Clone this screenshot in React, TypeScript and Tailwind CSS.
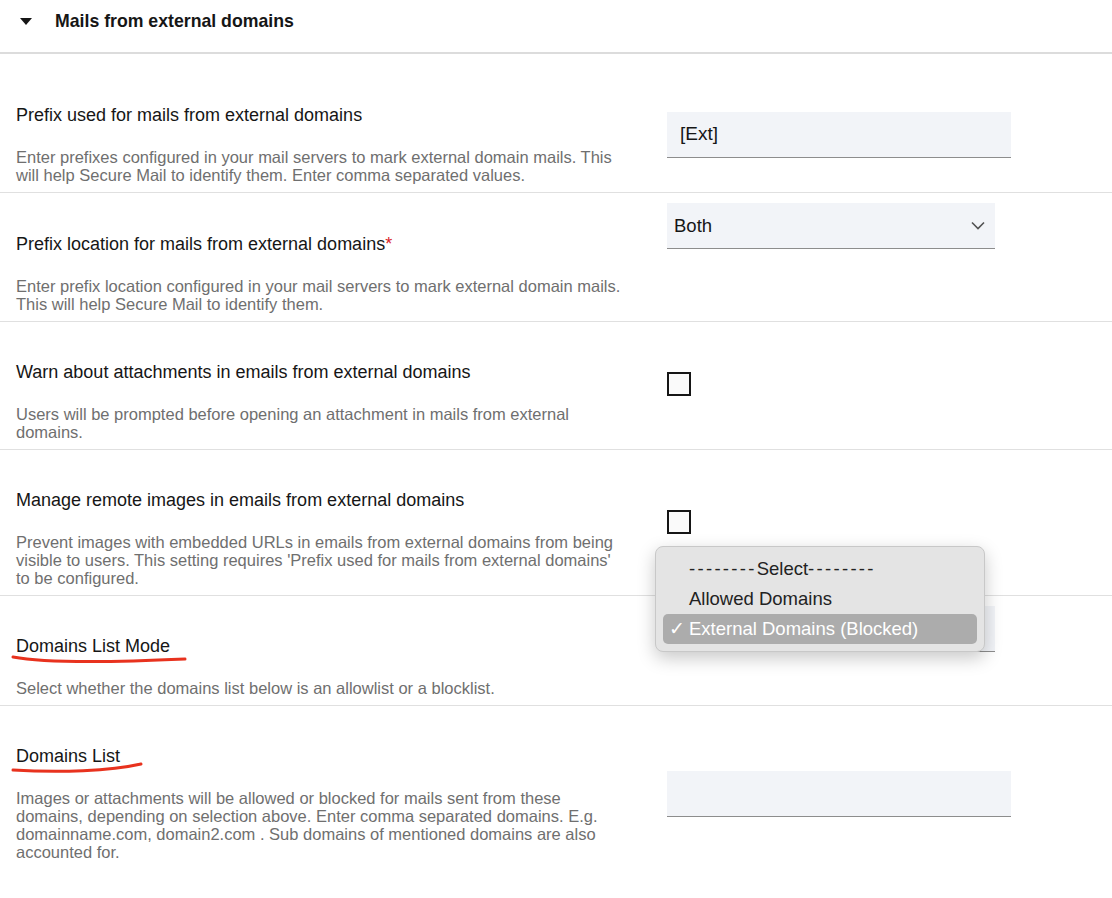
import React from "react";

const font = { fontFamily: '"Liberation Sans", Arial, sans-serif' };

function Row({
  label,
  required,
  desc,
  children,
  labelPt = "pt-[40px]",
  controlMt,
  underline,
  last,
}: {
  label: string;
  required?: boolean;
  desc: React.ReactNode;
  children?: React.ReactNode;
  labelPt?: string;
  controlMt: string;
  underline?: React.ReactNode;
  last?: boolean;
}) {
  return (
    <div className={`flex ${last ? "" : "border-b border-[#e0e0e0]"}`}>
      <div className={`w-[667px] shrink-0 pl-4 pr-[20px] pb-2 ${labelPt}`}>
        <div className="relative text-[18px] leading-[21px] text-[#161616]">
          {label}
          {required && <span className="text-[#da1e28]">*</span>}
          {underline}
        </div>
        <div className="mt-[22px] text-[16.5px] leading-[18px] text-[#6f6f6f]">{desc}</div>
      </div>
      <div className={`flex-1 ${controlMt}`}>{children}</div>
    </div>
  );
}

function TextInput({ value }: { value?: string }) {
  return (
    <div className="flex h-[46px] w-[344px] items-center border-b border-[#8d8d8d] bg-[#f2f4f8] px-[13px] text-[19px] text-[#161616]">
      {value}
    </div>
  );
}

function Select({ value }: { value?: string }) {
  return (
    <div className="flex h-[46px] w-[328px] items-center justify-between border-b border-[#8d8d8d] bg-[#f2f4f8] pl-[7px] pr-[10px] text-[18.5px] text-[#161616]">
      <span>{value}</span>
      <svg width="14" height="9" viewBox="0 0 14 9" fill="none">
        <path d="M1 1.5 L7 7.5 L13 1.5" stroke="#525252" strokeWidth="1.6" />
      </svg>
    </div>
  );
}

function Checkbox() {
  return <div className="h-[24px] w-[24px] border-[2px] border-[#161616] bg-[#fafafa]" />;
}

export default function App() {
  return (
    <div className="relative min-h-[898px] w-[1112px] bg-white" style={font}>
      {/* Header */}
      <div className="flex h-[54px] items-start border-b-2 border-[#dcdcdc]">
        <div className="flex items-center pl-[20px] pt-[11px]">
          <svg width="12" height="8" viewBox="0 0 12 8" className="mt-[1px]">
            <path d="M0 0 L12 0 L6 7 Z" fill="#161616" />
          </svg>
          <span className="ml-[23px] text-[17.7px] font-bold leading-[20px] text-[#161616]">
            Mails from external domains
          </span>
        </div>
      </div>

      <Row
        label="Prefix used for mails from external domains"
        labelPt="pt-[51px]"
        controlMt="mt-[58px]"
        desc={
          <>
            Enter prefixes configured in your mail servers to mark external domain mails. This
            <br />
            will help Secure Mail to identify them. Enter comma separated values.
          </>
        }
      >
        <TextInput value="[Ext]" />
      </Row>

      <Row
        label="Prefix location for mails from external domains"
        required
        labelPt="pt-[41px]"
        controlMt="mt-[10px]"
        desc={
          <>
            Enter prefix location configured in your mail servers to mark external domain mails.
            <br />
            This will help Secure Mail to identify them.
          </>
        }
      >
        <Select value="Both" />
      </Row>

      <Row
        label="Warn about attachments in emails from external domains"
        controlMt="mt-[50px]"
        desc={
          <>
            Users will be prompted before opening an attachment in mails from external
            <br />
            domains.
          </>
        }
      >
        <Checkbox />
      </Row>

      <Row
        label="Manage remote images in emails from external domains"
        controlMt="mt-[60px]"
        desc={
          <>
            Prevent images with embedded URLs in emails from external domains from being
            <br />
            visible to users. This setting requires 'Prefix used for mails from external domains'
            <br />
            to be configured.
          </>
        }
      >
        <Checkbox />
      </Row>

      <Row
        label="Domains List Mode"
        controlMt="mt-[10px]"
        underline={
          <svg
            className="absolute left-[-6px] top-[16px]"
            width="185"
            height="16"
            viewBox="0 0 185 16"
            fill="none"
          >
            <path
              d="M3 5 C 40 12, 110 10, 175 7"
              stroke="#e8321e"
              strokeWidth="3"
              strokeLinecap="round"
            />
          </svg>
        }
        desc="Select whether the domains list below is an allowlist or a blocklist."
      >
        <Select value="" />
      </Row>

      <Row
        label="Domains List"
        controlMt="mt-[65px]"
        last
        underline={
          <svg
            className="absolute left-[-6px] top-[16px]"
            width="140"
            height="14"
            viewBox="0 0 140 14"
            fill="none"
          >
            <path
              d="M3 8 C 50 11, 100 9, 131 2"
              stroke="#e8321e"
              strokeWidth="3"
              strokeLinecap="round"
            />
          </svg>
        }
        desc={
          <>
            Images or attachments will be allowed or blocked for mails sent from these
            <br />
            domains, depending on selection above. Enter comma separated domains. E.g.
            <br />
            domainname.com, domain2.com . Sub domains of mentioned domains are also
            <br />
            accounted for.
          </>
        }
      >
        <TextInput />
      </Row>

      {/* Open dropdown menu */}
      <div className="absolute left-[655px] top-[546px] w-[330px] rounded-[8px] border border-[#c8c8c8] bg-[#e4e4e4] px-[7px] py-[7px] text-[18.5px] leading-[30px] text-[#222] shadow-[0_6px_18px_rgba(0,0,0,0.22)]">
        <div className="pl-[26px]">
          <span className="tracking-[2.3px]">--------</span>
          <span>Select</span>
          <span className="tracking-[2.3px]">--------</span>
        </div>
        <div className="pl-[26px]">Allowed Domains</div>
        <div className="flex rounded-[5px] bg-[#acacac] text-white">
          <span className="w-[26px] pl-[6px]">✓</span>
          <span>External Domains (Blocked)</span>
        </div>
      </div>
    </div>
  );
}
